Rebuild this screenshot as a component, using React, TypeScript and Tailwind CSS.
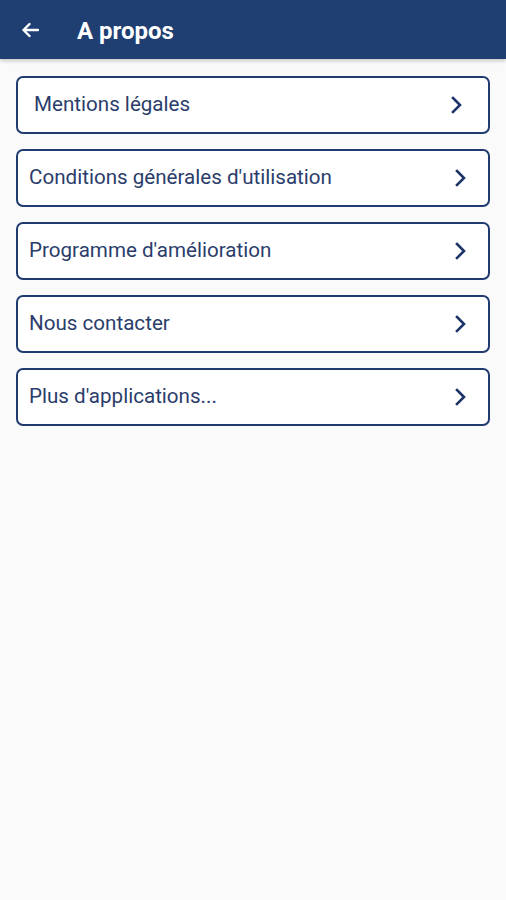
import React from "react";

const items = [
  { label: "Mentions légales", first: true },
  { label: "Conditions générales d'utilisation" },
  { label: "Programme d'amélioration" },
  { label: "Nous contacter" },
  { label: "Plus d'applications..." },
];

function Chevron() {
  return (
    <svg width="14" height="20" viewBox="0 0 14 20" fill="none">
      <path d="M3 3 L10 10 L3 17" stroke="#1c3468" strokeWidth="2.6" strokeLinecap="square" strokeLinejoin="miter" />
    </svg>
  );
}

export default function App() {
  return (
    <div className="min-h-[900px] bg-[#fafafa]" style={{ fontFamily: "Roboto, 'Liberation Sans', sans-serif" }}>
      <div className="h-[59px] bg-[#1f3f73] flex items-center shadow-[0_2px_4px_rgba(0,0,0,0.2)] relative">
        <div className="w-[77px] flex items-center pl-[21px]">
          <svg width="18" height="16" viewBox="0 0 18 16" fill="none">
            <path d="M17 8 H2.5 M8.5 2 L2.5 8 L8.5 14" stroke="#ffffff" strokeWidth="2.4" strokeLinecap="round" strokeLinejoin="round" />
          </svg>
        </div>
        <span className="text-white text-[24px] font-bold pt-[2px]">A propos</span>
      </div>
      <div className="flex flex-col gap-[15.5px] px-[16px] pt-[17px]">
        {items.map((it) => (
          <div
            key={it.label}
            className={`h-[57.5px] border-2 border-[#1f3b70] rounded-[7px] bg-white flex items-center justify-between ${it.first ? "pl-[16px] pr-[24px]" : "pl-[11px] pr-[20px]"}`}
          >
            <span className="text-[20.6px] text-[#2b3d6b]">{it.label}</span>
            <Chevron />
          </div>
        ))}
      </div>
    </div>
  );
}
